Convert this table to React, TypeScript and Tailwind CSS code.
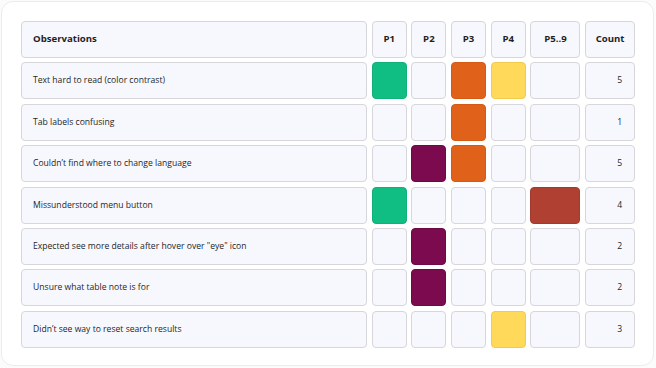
import React from "react";

type Mark = "green" | "orange" | "yellow" | "purple" | "red" | null;

const swatch: Record<string, string> = {
  green: "bg-[#10bd83] border-[#0fb07a]",
  orange: "bg-[#e0621a] border-[#d45a16]",
  yellow: "bg-[#ffd95a] border-[#f0cb50]",
  purple: "bg-[#7b0a4f] border-[#6e0946]",
  red: "bg-[#b04032] border-[#a33a2d]",
};

const rows: { text: string; marks: Mark[]; count: number }[] = [
  { text: "Text hard to read (color contrast)", marks: ["green", null, "orange", "yellow", null], count: 5 },
  { text: "Tab labels confusing", marks: [null, null, "orange", null, null], count: 1 },
  { text: "Couldn’t find where to change language", marks: [null, "purple", "orange", null, null], count: 5 },
  { text: "Missunderstood menu button", marks: ["green", null, null, null, "red"], count: 4 },
  { text: "Expected see more details after hover over \"eye\" icon", marks: [null, "purple", null, null, null], count: 2 },
  { text: "Unsure what table note is for", marks: [null, "purple", null, null, null], count: 2 },
  { text: "Didn’t see way to reset search results", marks: [null, null, null, "yellow", null], count: 3 },
];

const headers = ["P1", "P2", "P3", "P4", "P5..9"];

const cell = "rounded-[4px] border border-[#d6d6db] bg-[#f7f8fd] h-[37px] flex items-center";

export default function App() {
  return (
    <div
      className="w-[656px] h-[368px] bg-[#fbfbfb] p-px"
      style={{ fontFamily: '"Open Sans", "Noto Sans", sans-serif' }}
    >
      <div className="h-[365px] w-[653px] rounded-[12px] border border-[#ececee] bg-white pl-[19px] pt-[19px]">
        <div className="grid grid-cols-[346px_35px_35px_35px_35px_50px_50px] gap-x-[4.7px] gap-y-[4.4px] text-[#1f1f1f]">
          <div className={`${cell} pl-[11px] text-[9.6px] font-bold`}>Observations</div>
          {headers.map((h) => (
            <div key={h} className={`${cell} justify-center text-[9.6px] font-bold`}>
              {h}
            </div>
          ))}
          <div className={`${cell} justify-center text-[9.6px] font-bold`}>Count</div>

          {rows.map((r) => (
            <React.Fragment key={r.text}>
              <div className={`${cell} pl-[11px] text-[8.6px]`}>{r.text}</div>
              {r.marks.map((m, i) => (
                <div
                  key={i}
                  className={
                    m
                      ? `rounded-[4px] border h-[37px] ${swatch[m]}`
                      : cell
                  }
                />
              ))}
              <div className={`${cell} justify-end pr-[12px] text-[8.6px]`}>{r.count}</div>
            </React.Fragment>
          ))}
        </div>
      </div>
    </div>
  );
}
